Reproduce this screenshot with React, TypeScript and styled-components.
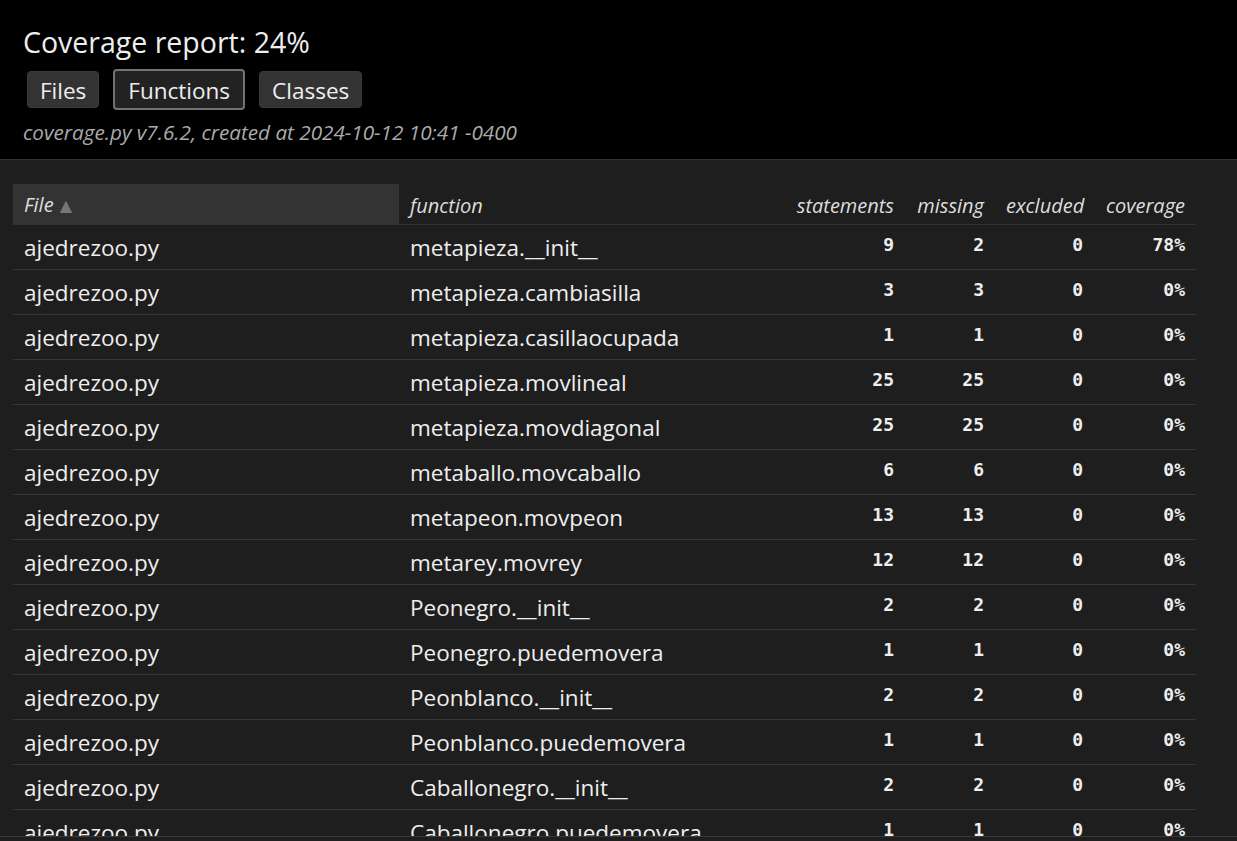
import styled, { createGlobalStyle } from "styled-components";

const GlobalStyle = createGlobalStyle`
  html, body {
    margin: 0;
    padding: 0;
    background: #1e1e1e;
    color: #eee;
    font-family: "Open Sans", "Noto Sans", sans-serif;
  }
`;

const Header = styled.header`
  background: #000;
  border-bottom: 1px solid #333;
  padding: 24px 23px 13.5px;
`;

const Title = styled.h1`
  margin: 0;
  font-size: 28.5px;
  line-height: 37px;
  font-weight: 400;
  color: #eee;
`;

const Nav = styled.nav`
  display: flex;
  align-items: center;
  gap: 14px;
  margin: 8px 0 0 4px;
`;

const NavButton = styled.button<{ $current?: boolean }>`
  font-family: inherit;
  font-size: 22.5px;
  line-height: 27px;
  color: #eee;
  background: ${(p) => (p.$current ? "#222" : "#333")};
  border: ${(p) => (p.$current ? "2px solid #737373" : "1px solid #3a3a3a")};
  border-radius: 4px;
  padding: ${(p) => (p.$current ? "6px 13px 4px" : "5px 12px 3px")};
  cursor: pointer;
`;

const Meta = styled.p`
  margin: 7.5px 0 0;
  font-size: 20.7px;
  line-height: 28px;
  font-style: italic;
  color: #aaa;
`;

const Main = styled.main`
  padding: 24px 13px 40px;
`;

const Table = styled.table`
  width: 1183px;
  table-layout: fixed;
  border-collapse: collapse;
`;

const Th = styled.th<{ $num?: boolean; $sorted?: boolean }>`
  font-size: 20px;
  line-height: 28px;
  font-weight: 400;
  font-style: italic;
  color: #ddd;
  text-align: ${(p) => (p.$num ? "right" : "left")};
  padding: 7px 11px 4px;
  background: ${(p) => (p.$sorted ? "#333" : "transparent")};
  border-bottom: 1px solid #333;
  white-space: nowrap;
`;

const Arrow = styled.span`
  font-family: "DejaVu Sans", sans-serif;
  font-style: normal;
  font-size: 16px;
  color: #777;
  margin-left: 6px;
  vertical-align: 1px;
`;

const Row = styled.tr`
  border-bottom: 1px solid #363636;
`;

const NameCell = styled.td`
  font-size: 22.5px;
  line-height: 30px;
  padding: 8px 11px 6px;
  vertical-align: top;
  white-space: nowrap;
  overflow: hidden;
`;

const NumCell = styled.td`
  font-family: "DejaVu Sans Mono", "Liberation Mono", monospace;
  font-weight: 700;
  font-size: 18px;
  line-height: 21px;
  padding: 9px 11px 0;
  vertical-align: top;
  text-align: right;
  color: #eee;
`;

const FooterEdge = styled.div`
  position: fixed;
  left: 0;
  right: 0;
  bottom: 0;
  height: 4px;
  background: #1e1e1e;
  border-top: 1px solid #3a3a3a;
`;

type Fn = [string, number, number, number, string];

const rows: Fn[] = [
  ["metapieza.__init__", 9, 2, 0, "78%"],
  ["metapieza.cambiasilla", 3, 3, 0, "0%"],
  ["metapieza.casillaocupada", 1, 1, 0, "0%"],
  ["metapieza.movlineal", 25, 25, 0, "0%"],
  ["metapieza.movdiagonal", 25, 25, 0, "0%"],
  ["metaballo.movcaballo", 6, 6, 0, "0%"],
  ["metapeon.movpeon", 13, 13, 0, "0%"],
  ["metarey.movrey", 12, 12, 0, "0%"],
  ["Peonegro.__init__", 2, 2, 0, "0%"],
  ["Peonegro.puedemovera", 1, 1, 0, "0%"],
  ["Peonblanco.__init__", 2, 2, 0, "0%"],
  ["Peonblanco.puedemovera", 1, 1, 0, "0%"],
  ["Caballonegro.__init__", 2, 2, 0, "0%"],
  ["Caballonegro.puedemovera", 1, 1, 0, "0%"],
  ["Caballoblanco.__init__", 2, 2, 0, "0%"],
  ["Caballoblanco.puedemovera", 1, 1, 0, "0%"],
];

const App = () => {
  return (
    <>
      <GlobalStyle />
      <Header>
        <Title>Coverage report: 24%</Title>
        <Nav>
          <NavButton>Files</NavButton>
          <NavButton $current>Functions</NavButton>
          <NavButton>Classes</NavButton>
        </Nav>
        <Meta>coverage.py v7.6.2, created at 2024-10-12 10:41 -0400</Meta>
      </Header>
      <Main>
        <Table>
          <colgroup>
            <col style={{ width: 386 }} />
            <col style={{ width: 386 }} />
            <col style={{ width: 120 }} />
            <col style={{ width: 90 }} />
            <col style={{ width: 99 }} />
            <col style={{ width: 102 }} />
          </colgroup>
          <thead>
            <tr>
              <Th $sorted>
                File<Arrow>▲</Arrow>
              </Th>
              <Th>function</Th>
              <Th $num>statements</Th>
              <Th $num>missing</Th>
              <Th $num>excluded</Th>
              <Th $num>coverage</Th>
            </tr>
          </thead>
          <tbody>
            {rows.map(([fn, st, miss, exc, cov], i) => (
              <Row key={i}>
                <NameCell>ajedrezoo.py</NameCell>
                <NameCell>{fn}</NameCell>
                <NumCell>{st}</NumCell>
                <NumCell>{miss}</NumCell>
                <NumCell>{exc}</NumCell>
                <NumCell>{cov}</NumCell>
              </Row>
            ))}
          </tbody>
        </Table>
      </Main>
      <FooterEdge />
    </>
  );
};

export default App;
